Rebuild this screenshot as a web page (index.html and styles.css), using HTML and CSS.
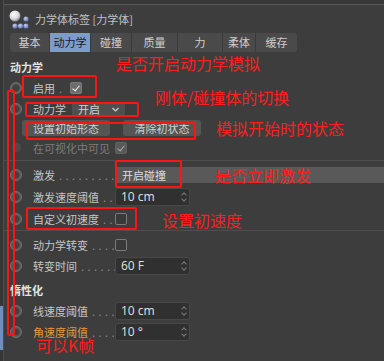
FILE: index.html
```html
<!DOCTYPE html>
<html lang="zh">

<head>
    <meta charset="UTF-8">
    <title>力学体标签</title>
    <link rel="stylesheet" href="styles.css">
</head>

<body>
    <div class="edge"><span class="edge-blue"></span></div>
    <div class="panel">
        <div class="topbar"></div>
        <div class="head">
            <svg class="tag-icon" width="22" height="20" viewBox="0 0 22 20">
                <defs>
                    <radialGradient id="ball" cx="0.4" cy="0.35" r="0.7">
                        <stop offset="0" stop-color="#ffffff" />
                        <stop offset="0.6" stop-color="#d8d8d8" />
                        <stop offset="1" stop-color="#7a7a7a" />
                    </radialGradient>
                    <radialGradient id="dot" cx="0.4" cy="0.35" r="0.7">
                        <stop offset="0" stop-color="#c8d2f4" />
                        <stop offset="1" stop-color="#5a68a8" />
                    </radialGradient>
                </defs>
                <circle cx="6" cy="6" r="5.5" fill="url(#ball)" />
                <circle cx="17" cy="9" r="2.6" fill="url(#dot)" />
                <circle cx="17" cy="16" r="2.6" fill="url(#dot)" />
                <circle cx="11.5" cy="16" r="2.6" fill="url(#dot)" />
                <circle cx="6" cy="16" r="2.6" fill="url(#dot)" />
            </svg>
            <span class="title">力学体标签 [力学体]</span>
        </div>

        <div class="tabs">
            <span class="tab tab-first">基本</span>
            <span class="tab active">动力学</span>
            <span class="tab">碰撞</span>
            <span class="tab w46">质量</span>
            <span class="tab w45">力</span>
            <span class="tab w32">柔体</span>
            <span class="tab tab-last">缓存</span>
        </div>

        <div class="section-title">动力学</div>

        <div class="row">
            <span class="radio"></span>
            <span class="label short">启用<span class="dots">.</span></span>
            <span class="check on"></span>
        </div>
        <div class="row">
            <span class="radio"></span>
            <span class="label mid">动力学</span>
            <span class="select">开启
                <svg class="chev" width="7" height="5" viewBox="0 0 7 5"><path d="M0.5 1 L3.5 4 L6.5 1" fill="none" stroke="#cfcfcf" stroke-width="1.2" /></svg>
            </span>
        </div>
        <div class="btn-row">
            <span class="btn b1">设置初始形态</span>
            <span class="btn b2">清除初状态</span>
        </div>
        <div class="row dim">
            <span class="radio small"></span>
            <span class="label">在可视化中可见</span>
            <span class="check on dim-check"></span>
        </div>

        <div class="sep"></div>

        <div class="row tall">
            <span class="radio"></span>
            <span class="label">激发<span class="dots">. . . . . . . . . . . .</span></span>
            <span class="wide-field">开启碰撞</span>
        </div>
        <div class="row tall">
            <span class="radio"></span>
            <span class="label">激发速度阈值<span class="dots">. . . .</span></span>
            <span class="num">10 cm<span class="spin"></span></span>
        </div>
        <div class="row tall">
            <span class="radio"></span>
            <span class="label">自定义初速度<span class="dots">. . . .</span></span>
            <span class="check"></span>
        </div>

        <div class="sep sep2"></div>

        <div class="row">
            <span class="radio"></span>
            <span class="label">动力学转变<span class="dots">. . . . .</span></span>
            <span class="check"></span>
        </div>
        <div class="row">
            <span class="radio"></span>
            <span class="label">转变时间<span class="dots">. . . . . . .</span></span>
            <span class="num">60 F<span class="spin"></span></span>
        </div>

        <div class="section-title sub">惰性化</div>

        <div class="row">
            <span class="radio"></span>
            <span class="label">线速度阈值<span class="dots">. . . . .</span></span>
            <span class="num">10 cm<span class="spin"></span></span>
        </div>
        <div class="row tall">
            <span class="radio"></span>
            <span class="label orange">角速度阈值<span class="dots">. . . . .</span></span>
            <span class="num">10 °<span class="spin"></span></span>
        </div>
    </div>

    <!-- 红色标注 -->
    <div class="mark m-enable"></div>
    <div class="mark m-dyn"></div>
    <div class="mark m-btns"></div>
    <div class="mark m-left"></div>
    <div class="mark m-trigger"></div>
    <div class="mark m-vel"></div>

    <span class="note n1">是否开启动力学模拟</span>
    <span class="note n2">刚体/碰撞体的切换</span>
    <span class="note n3">模拟开始时的状态</span>
    <span class="note n4">是否立即激发</span>
    <span class="note n5">设置初速度</span>
    <span class="note n6">可以K帧</span>
</body>

</html>
```

FILE: styles.css
```css
body {
    margin: 0;
    width: 384px;
    height: 361px;
    overflow: hidden;
    background-color: #3d3d3d;
    font-family: "Noto Sans CJK SC", "Noto Sans", sans-serif;
    font-size: 11px;
    color: #c6c6c6;
    display: flex;
}

.edge {
    width: 3px;
    flex-shrink: 0;
    background-color: #363636;
    border-right: 1px solid #4d4d4d;
    position: relative;
}

.edge-blue {
    position: absolute;
    left: 0;
    top: 306px;
    width: 3px;
    height: 44px;
    background-color: #6f8fbf;
}

.panel {
    flex: 1;
}

.topbar {
    height: 4px;
    background-color: #383838;
    border-bottom: 1px solid #5a5a5a;
}

.head {
    height: 27px;
    display: flex;
    align-items: center;
    padding-left: 5px;
}

.tag-icon {
    margin-top: 2px;
}

.title {
    margin-left: 4px;
    color: #c0c0c0;
    line-height: 14px;
}

.tabs {
    display: flex;
    height: 19px;
    margin: 1px 0 0 6px;
}

.tab {
    width: 41px;
    line-height: 19px;
    text-align: center;
    background-color: #4a4a4a;
    border-right: 1px solid #3a3a3a;
    box-sizing: border-box;
    color: #cdcdcd;
}

.tab-first {
    width: 40px;
    border-radius: 3px 0 0 3px;
}

.tab-last {
    width: 41px;
    border-right: none;
    border-radius: 0 3px 3px 0;
}

.w46 {
    width: 46px;
}

.w45 {
    width: 45px;
}

.w32 {
    width: 33px;
}

.tab.active {
    background-color: #7d9ccb;
    color: #1c1c1c;
}

.section-title {
    margin: 8px 0 3px 6px;
    height: 14px;
    line-height: 14px;
    font-weight: bold;
    color: #e2e2e2;
}

.section-title.sub {
    margin-top: 7px;
}

.row {
    height: 21px;
    display: flex;
    align-items: center;
    padding-left: 6px;
}

.row.tall {
    height: 22px;
}

.radio {
    width: 12px;
    height: 12px;
    border-radius: 50%;
    box-sizing: border-box;
    background: radial-gradient(circle, #404040 0 3px, #5c5c5c 4px);
    border: 1px solid #707070;
    flex-shrink: 0;
}

.radio.small {
    width: 9px;
    height: 9px;
    margin: 0 1.5px;
    border: none;
    background: #4b4b4b;
}

.label {
    width: 82px;
    margin-left: 11px;
    display: flex;
    white-space: nowrap;
    overflow: hidden;
    line-height: 14px;
}

.label.short {
    width: 37px;
}

.label.mid {
    width: 39px;
}

.dots {
    margin-left: 4px;
    color: #8c8c8c;
    letter-spacing: 0.5px;
}

.orange {
    color: #e09a3c;
}

.dim {
    color: #7c7c7c;
}

.check {
    width: 12px;
    height: 12px;
    box-sizing: border-box;
    border: 1px solid #7a7a7a;
    border-radius: 2px;
    background-color: #393939;
    position: relative;
}

.check.on {
    background-color: #6c6c6c;
    border-color: #7a7a7a;
}

.check.on::after {
    content: "";
    position: absolute;
    left: 3px;
    top: 1px;
    width: 3px;
    height: 6px;
    border: solid #f2f2f2;
    border-width: 0 1.6px 1.6px 0;
    transform: rotate(40deg);
}

.dim-check {
    opacity: 0.6;
}

.select {
    width: 53px;
    height: 13px;
    line-height: 13px;
    margin-top: 1px;
    background-color: #4f4f4f;
    display: flex;
    align-items: center;
    padding-left: 6px;
    box-sizing: border-box;
    color: #d2d2d2;
}

.chev {
    margin-left: auto;
    margin-right: 6px;
}

.btn-row {
    height: 18px;
    display: flex;
    padding-left: 18px;
}

.btn {
    height: 16px;
    margin-top: 1px;
    line-height: 16px;
    background-color: #555555;
    border-radius: 3px;
    text-align: center;
    color: #cfcfcf;
}

.b1 {
    width: 88px;
}

.b2 {
    width: 78px;
    margin-left: 13px;
}

.sep {
    height: 1px;
    background-color: #4e4e4e;
    margin: 2px 0 3px;
}

.sep.sep2 {
    margin-top: 0;
}

.wide-field {
    flex: 1;
    height: 16px;
    line-height: 16px;
    margin-left: 1px;
    padding-left: 6px;
    background-color: #595959;
    color: #dcdcdc;
}

.num {
    width: 75px;
    height: 18px;
    line-height: 16px;
    box-sizing: border-box;
    border: 1px solid #484848;
    border-radius: 3px;
    background-color: #303030;
    padding-left: 5px;
    color: #dadada;
    font-family: "Noto Sans", sans-serif;
    font-size: 12px;
    position: relative;
}

.spin {
    position: absolute;
    right: 2px;
    top: 2px;
    width: 6px;
    height: 12px;
}

.spin::before,
.spin::after {
    content: "";
    position: absolute;
    left: 1px;
    width: 3px;
    height: 3px;
    border: solid #7a7a7a;
    border-width: 1px 0 0 1px;
}

.spin::before {
    top: 2px;
    transform: rotate(45deg);
}

.spin::after {
    top: 6px;
    transform: rotate(225deg);
}

.mark {
    position: absolute;
    border: 2.5px solid #ff1414;
    border-radius: 2px;
    box-sizing: border-box;
}

.m-enable {
    left: 22px;
    top: 75px;
    width: 75px;
    height: 23px;
}

.m-dyn {
    left: 25px;
    top: 102px;
    width: 114px;
    height: 15px;
}

.m-btns {
    left: 26px;
    top: 122px;
    width: 170px;
    height: 18px;
}

.m-left {
    left: 7px;
    top: 90px;
    width: 8px;
    height: 246px;
}

.m-trigger {
    left: 115px;
    top: 160px;
    width: 67px;
    height: 28px;
}

.m-vel {
    left: 26px;
    top: 207px;
    width: 111px;
    height: 23px;
}

.note {
    position: absolute;
    font-size: 16px;
    line-height: 18px;
    color: #ff1e1e;
    white-space: nowrap;
}

.n1 {
    left: 116px;
    top: 54px;
}

.n2 {
    left: 155px;
    top: 88px;
}

.n3 {
    left: 216px;
    top: 119px;
}

.n4 {
    left: 215px;
    top: 166px;
}

.n5 {
    left: 162px;
    top: 211px;
}

.n6 {
    left: 36px;
    top: 336px;
}
```
